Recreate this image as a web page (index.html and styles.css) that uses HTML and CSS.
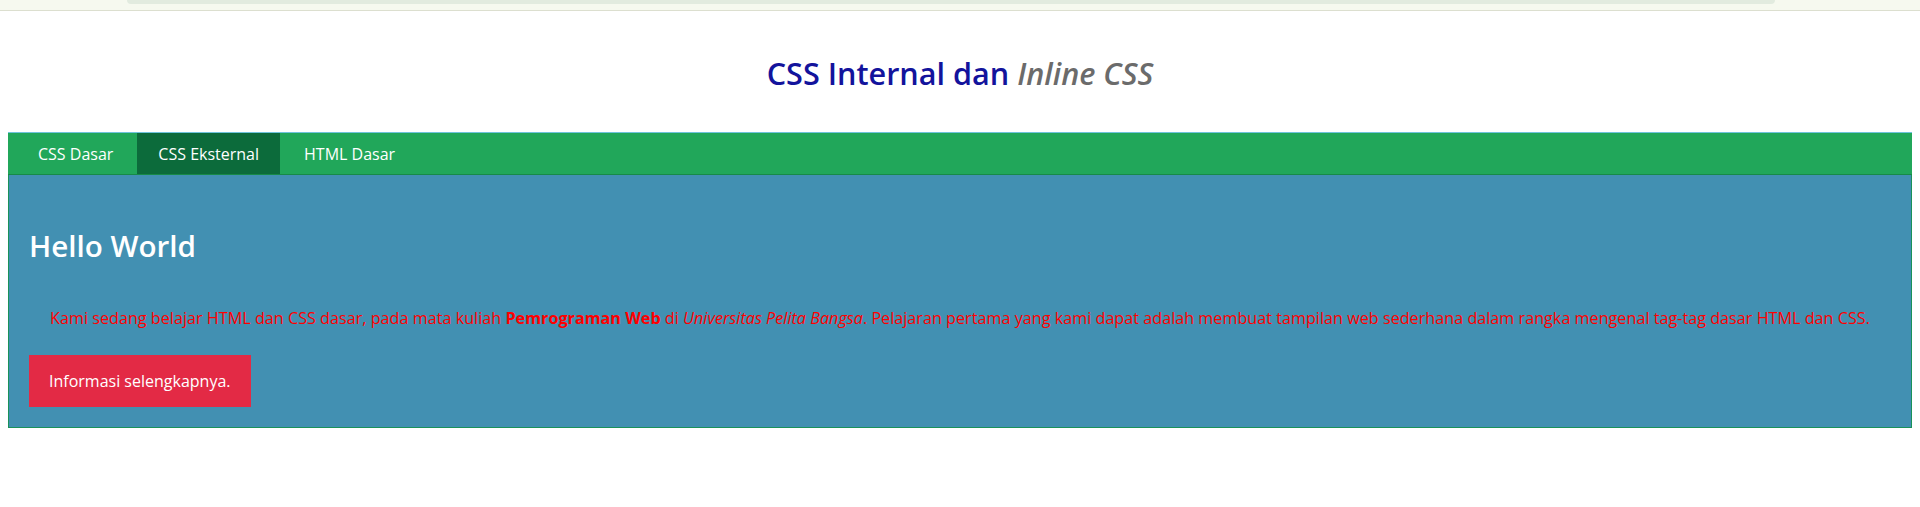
FILE: index.html
```html
<!DOCTYPE html>
<html lang="id">
<head>
<meta charset="utf-8">
<title>CSS Internal dan Inline CSS</title>
<link rel="stylesheet" href="styles.css">
</head>
<body>
<div class="chrome"><div class="chrome-bar"></div></div>
<div class="page">
  <h1 class="title">CSS Internal dan <em class="title-em">Inline CSS</em></h1>
  <nav class="nav">
    <a class="nav-item" href="#">CSS Dasar</a>
    <a class="nav-item nav-item-active" href="#">CSS Eksternal</a>
    <a class="nav-item" href="#">HTML Dasar</a>
  </nav>
  <section class="hero">
    <h2 class="hero-title">Hello World</h2>
    <p class="hero-text">Kami sedang belajar <span class="light">HTML dan CSS</span> dasar, pada mata kuliah <b>Pemrograman Web</b> di <i>Universitas Pelita Bangsa</i>. Pelajaran pertama yang kami dapat adalah membuat tampilan web sederhana dalam rangka mengenal tag-tag dasar <span class="light">HTML dan CSS</span>.</p>
    <a class="btn" href="#">Informasi selengkapnya.</a>
  </section>
</div>
</body>
</html>
```

FILE: styles.css
```css
* { box-sizing: border-box; }
html, body { margin: 0; padding: 0; background: #ffffff; }
body { font-family: "Open Sans", "Noto Sans", sans-serif; }

.chrome {
  height: 11px;
  background: #f6f9ef;
  border-bottom: 1px solid #dcdfcf;
  padding: 0 145px 0 127px;
}
.chrome-bar {
  height: 4px;
  background: #e2ebdf;
  border-radius: 0 0 5px 5px;
}

.page { padding: 0 8px; }

.title {
  margin: 0;
  padding: 43px 0 0;
  height: 121px;
  text-align: center;
  font-size: 30.6px;
  font-weight: 600;
  line-height: 38px;
  color: #13139c;
}
.title-em { color: #6b6b6b; font-weight: 600; }

.nav {
  display: flex;
  height: 43px;
  background: #21a75a;
  border-top: 1px solid #6fc3dc;
  border-bottom: 1px solid #178a47;
  padding-left: 6px;
}
.nav-item {
  display: flex;
  align-items: center;
  padding: 0 24px;
  color: #ffffff;
  text-decoration: none;
  font-size: 16px;
}
.nav-item-active { background: #0c6b3b; padding: 0 21px; }

.hero {
  background: #4290b2;
  border: 1px solid #19925a;
  border-top: 0;
  padding: 51px 20px 20px;
}
.hero-title {
  margin: 0;
  font-size: 29.6px;
  font-weight: 600;
  line-height: 40px;
  color: #ffffff;
}
.hero-text {
  margin: 41px 0 26px;
  text-align: center;
  color: #ff0000;
  font-size: 16.2px;
  line-height: 22px;
}
.light { font-weight: 400; }
.btn {
  display: inline-block;
  vertical-align: top;
  background: #e32a45;
  color: #ffffff;
  text-decoration: none;
  font-size: 16px;
  line-height: 52px;
  padding: 0 20px;
}
```
